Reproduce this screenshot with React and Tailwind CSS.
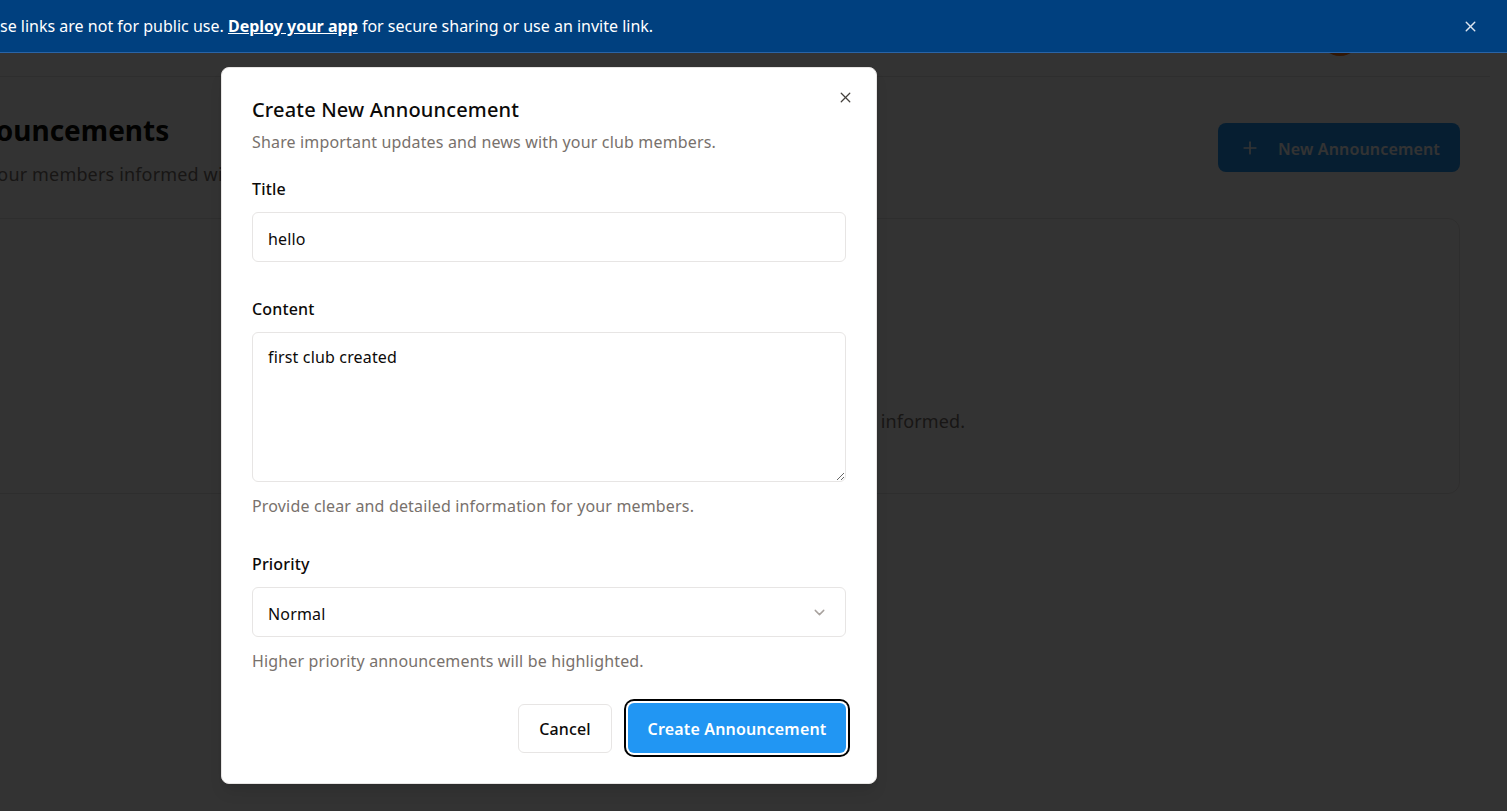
import React from "react";
import { ChevronDown, Plus, X } from "lucide-react";

const font = { fontFamily: '"Noto Sans", "Open Sans", sans-serif' };

export default function App() {
  return (
    <div
      className="relative w-[1507px] h-[811px] overflow-hidden bg-white text-[#0c0a09] tracking-[0.01em]"
      style={font}
    >
      {/* underlying page */}
      <div className="flex flex-col w-[1490px]">
        <header className="h-[77px] border-b border-[#e7e5e4] flex items-center justify-end pr-[130px]">
          <div className="w-10 h-10 rounded-full bg-[#f97316] -mt-[5px]" />
        </header>
        <main className="flex flex-col ml-[-60px] mr-[30px]">
          <div className="flex items-start justify-between pt-[34px]">
            <div className="flex flex-col">
              <h1 className="text-[28px] leading-[38px] font-bold tracking-normal">Announcements</h1>
              <p className="text-lg leading-7 mt-[11px] text-[#78716c]">
                Keep your members informed with the latest news and updates.
              </p>
            </div>
            <button className="mt-[12px] h-[49px] w-[242px] rounded-lg bg-[#2196f3] text-white flex items-center pl-[22px] gap-[18px] pt-[3px] text-base font-semibold">
              <Plus size={20} strokeWidth={2} className="-mt-[3px]" />
              <span>New Announcement</span>
            </button>
          </div>
          <div className="mt-[30px] h-[276px] rounded-xl border border-[#e7e5e4] flex flex-col items-center justify-center pr-[34px]">
            <div className="w-12 h-12 rounded-full bg-[#e3f2fd] mt-[30px]" />
            <h3 className="text-xl font-semibold mt-4">No announcements yet</h3>
            <p className="text-lg text-[#78716c] mt-2">
              Create your first announcement to keep your members informed.
            </p>
          </div>
        </main>
      </div>

      {/* overlay */}
      <div className="absolute inset-0 bg-black/80" />

      {/* banner */}
      <div className="absolute top-0 left-0 right-0 h-[53px] bg-[#00407f] border-b border-[#2a64a6] flex items-center justify-between text-white text-base tracking-normal pr-[28px]">
        <p className="whitespace-nowrap">
          se links are not for public use.{" "}
          <span className="font-bold underline">Deploy your app</span> for secure sharing or use an invite link.
        </p>
        <X size={17} strokeWidth={2} className="text-[#dbe4ef]" />
      </div>

      {/* dialog */}
      <div className="absolute left-[221px] top-[67px] w-[656px] bg-white rounded-lg border border-[#e7e5e4] shadow-lg px-[30px] pt-[28px] pb-[30px] flex flex-col">
        <button className="absolute right-[22px] top-[21px] text-[#44403c]">
          <X size={17} strokeWidth={1.75} />
        </button>
        <h2 className="text-xl leading-7 font-medium">Create New Announcement</h2>
        <p className="text-base leading-6 mt-[6px] text-[#78716c]">
          Share important updates and news with your club members.
        </p>

        <label className="text-base leading-6 font-medium mt-[23px]">Title</label>
        <input
          readOnly
          value="hello"
          className="mt-[11px] h-[50px] w-full rounded-md border border-[#e7e5e4] px-[15px] pt-[4px] text-base tracking-[0.01em] outline-none"
          style={font}
        />

        <label className="text-base leading-6 font-medium mt-[35px]">Content</label>
        <textarea
          readOnly
          value="first club created"
          className="mt-[11px] h-[150px] w-full rounded-md border border-[#e7e5e4] px-[15px] py-[12px] text-base leading-6 tracking-[0.01em] outline-none"
          style={font}
        />
        <p className="text-base leading-6 mt-[12px] text-[#78716c]">
          Provide clear and detailed information for your members.
        </p>

        <label className="text-base leading-6 font-medium mt-[34px]">Priority</label>
        <div className="mt-[11px] h-[50px] w-full rounded-md border border-[#e7e5e4] px-[15px] flex items-center justify-between">
          <span className="text-base pt-[3px]">Normal</span>
          <ChevronDown size={17} className="text-[#a8a29e] mr-[2px]" />
        </div>
        <p className="text-base leading-6 mt-[12px] text-[#78716c]">
          Higher priority announcements will be highlighted.
        </p>

        <div className="mt-[30px] flex justify-end items-center gap-4">
          <button className="h-[49px] w-[94px] rounded-md border border-[#e7e5e4] bg-white text-base font-medium pt-[2px]">
            Cancel
          </button>
          <button className="h-[50px] w-[218px] rounded-md bg-[#2196f3] text-white text-base font-semibold ring-2 ring-black ring-offset-2 ring-offset-white pt-[2px]">
            Create Announcement
          </button>
        </div>
      </div>
    </div>
  );
}
